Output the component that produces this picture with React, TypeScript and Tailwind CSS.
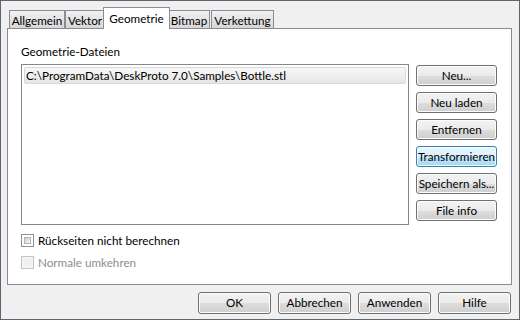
import React from "react";

const font = { fontFamily: 'Lato, "Noto Sans", sans-serif' };

function Btn({ label, active = false, className = "" }: { label: string; active?: boolean; className?: string }) {
  return (
    <div
      className={
        "flex items-center justify-center whitespace-nowrap rounded-[3px] border text-[11.7px] leading-none text-black " +
        (active
          ? "border-[#3c7fb1] bg-[linear-gradient(#eaf6fd_0%,#d9f0fc_50%,#bee6fd_51%,#a7d9f5_100%)] shadow-[inset_0_0_0_1px_#f4fbfe]"
          : "border-[#707070] bg-[linear-gradient(#f2f2f2_0%,#ebebeb_50%,#dddddd_51%,#cfcfcf_100%)] shadow-[inset_0_0_0_1px_#fcfcfc]") +
        " " +
        className
      }
    >
      {label}
    </div>
  );
}

function Tab({ label, selected = false, w }: { label: string; selected?: boolean; w: string }) {
  if (selected) {
    return (
      <div
        className={
          "relative z-10 -mx-[2px] -mb-px flex h-[22px] items-start justify-center whitespace-nowrap border border-b-0 border-[#898c95] bg-white pt-[3px] text-[11.7px] leading-[14px] text-black " +
          w
        }
      >
        {label}
      </div>
    );
  }
  return (
    <div
      className={
        "flex h-[18px] items-start justify-center whitespace-nowrap border border-b-0 border-[#898c95] bg-[linear-gradient(#f2f2f2,#e3e3e3_50%,#d6d6d6)] pt-[2px] text-[11.7px] leading-[14px] text-black " +
        w
      }
    >
      {label}
    </div>
  );
}

function Check({ label, disabled = false }: { label: string; disabled?: boolean }) {
  return (
    <div className="flex h-[13px] items-center gap-[4px]">
      <div
        className={
          "h-[13px] w-[13px] border p-[2px] " + (disabled ? "border-[#c4c4c4] bg-[#f4f4f4]" : "border-[#8e8f8f] bg-white")
        }
      >
        <div
          className={
            "h-full w-full " +
            (disabled ? "bg-[#f0f0f0]" : "bg-[linear-gradient(135deg,#cbcfd5,#f6f6f6)] border border-[#b0b4bb]")
          }
        />
      </div>
      <span className={"text-[11.7px] leading-none " + (disabled ? "text-[#8d8d8d]" : "text-black")}>{label}</span>
    </div>
  );
}

export default function App() {
  return (
    <div style={font} className="h-[320px] w-[520px] overflow-hidden border border-[#5b6672] bg-[#f0f0f0]">
      <div className="pl-[6px] pt-[6px]">
        <div className="flex h-[21px] items-end pl-[2px]">
          <Tab label="Allgemein" w="w-[56px]" />
          <Tab label="Vektor" w="w-[40px]" />
          <Tab label="Geometrie" selected w="w-[67px]" />
          <Tab label="Bitmap" w="w-[42px]" />
          <div className="w-px" />
          <Tab label="Verkettung" w="w-[63px]" />
        </div>
        <div className="h-[257px] w-[505px] border border-[#898c95] bg-white pl-[13px] pt-[15px]">
          <div className="h-[20px] text-[11.7px] leading-[14px] text-black">Geometrie-Dateien</div>
          <div className="flex gap-[7px]">
            <div className="h-[161px] w-[388px] border border-[#828790] bg-white p-[2px]">
              <div className="flex h-[17px] items-center rounded-[2px] border border-[#d9d9d9] bg-[linear-gradient(#f8f8f8,#e5e5e5)] pl-[1px] text-[11.7px] leading-none text-black">
                C:\ProgramData\DeskProto 7.0\Samples\Bottle.stl
              </div>
            </div>
            <div className="flex flex-col gap-[6px] pt-px">
              <Btn label="Neu..." className="h-[21px] w-[81px]" />
              <Btn label="Neu laden" className="h-[21px] w-[81px]" />
              <Btn label="Entfernen" className="h-[21px] w-[81px]" />
              <Btn label="Transformieren" active className="h-[21px] w-[81px]" />
              <Btn label="Speichern als..." className="h-[21px] w-[81px]" />
              <Btn label="File info" className="h-[21px] w-[81px]" />
            </div>
          </div>
          <div className="mt-[9px] flex flex-col gap-[9px]">
            <Check label="Rückseiten nicht berechnen" />
            <Check label="Normale umkehren" disabled />
          </div>
        </div>
      </div>
      <div className="mr-[8px] mt-[7px] flex justify-end gap-[7px]">
        <Btn label="OK" className="h-[22px] w-[73px]" />
        <Btn label="Abbrechen" className="h-[22px] w-[73px]" />
        <Btn label="Anwenden" className="h-[22px] w-[73px]" />
        <Btn label="Hilfe" className="h-[22px] w-[73px]" />
      </div>
    </div>
  );
}
